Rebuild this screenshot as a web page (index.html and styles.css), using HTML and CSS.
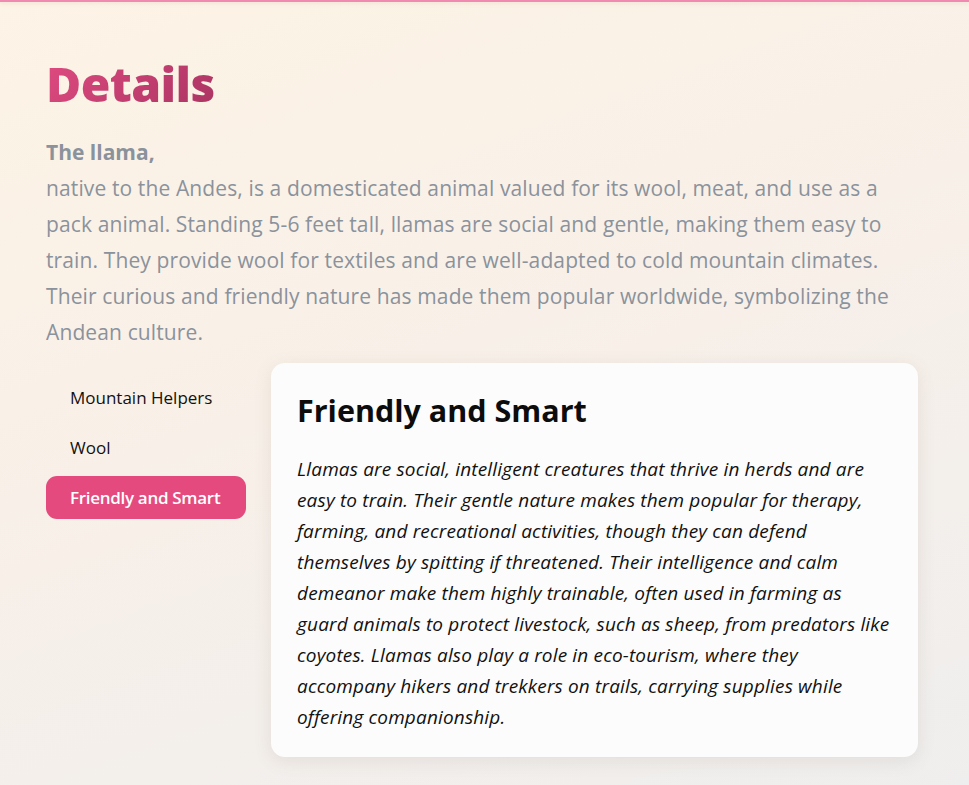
FILE: index.html
```html
<!DOCTYPE html>
<html lang="en">
<head>
<meta charset="utf-8">
<title>Details</title>
<link rel="stylesheet" href="styles.css">
</head>
<body>
<div class="topline"></div>
<main class="page">
  <h1 class="title">Details</h1>
  <p class="intro"><strong>The llama,</strong><br>native to the Andes, is a domesticated animal valued for its wool, meat, and use as a pack animal. Standing 5-6 feet tall, llamas are social and gentle, making them easy to train. They provide wool for textiles and are well-adapted to cold mountain climates. Their curious and friendly nature has made them popular worldwide, symbolizing the Andean culture.</p>
  <section class="tabs">
    <nav class="tab-list">
      <button class="tab">Mountain Helpers</button>
      <button class="tab">Wool</button>
      <button class="tab active">Friendly and Smart</button>
    </nav>
    <article class="card">
      <h2 class="card-title">Friendly and Smart</h2>
      <p class="card-text">Llamas are social, intelligent creatures that thrive in herds and are easy to train. Their gentle nature makes them popular for therapy, farming, and recreational activities, though they can defend themselves by spitting if threatened. Their intelligence and calm demeanor make them highly trainable, often used in farming as guard animals to protect livestock, such as sheep, from predators like coyotes. Llamas also play a role in eco-tourism, where they accompany hikers and trekkers on trails, carrying supplies while offering companionship.</p>
    </article>
  </section>
</main>
</body>
</html>
```

FILE: styles.css
```css
* { box-sizing: border-box; }
html, body { margin: 0; padding: 0; }
body {
  min-height: 785px;
  background: linear-gradient(160deg, #fdf3e6 0%, #f8f0e8 45%, #efeeee 100%);
  font-family: "Open Sans", "Noto Sans", sans-serif;
}
.topline {
  height: 2px;
  background: #f08ab0;
  box-shadow: 0 1px 4px rgba(200, 150, 120, 0.25);
}
.page {
  padding: 52px 51px 30px 46px;
}
.title {
  margin: 0;
  font-size: 48px;
  line-height: 60px;
  font-weight: 800;
  letter-spacing: -0.6px;
  background: linear-gradient(135deg, #e04b80, #a93462);
  -webkit-background-clip: text;
  background-clip: text;
  color: transparent;
  display: inline-block;
}
.intro {
  margin: 20px 0 0 0;
  font-size: 21px;
  line-height: 36px;
  letter-spacing: 0.12px;
  color: #8a929c;
}
.intro strong { font-weight: 700; letter-spacing: 0; }
.tabs {
  display: flex;
  gap: 25px;
  margin-top: 13px;
  align-items: flex-start;
}
.tab-list {
  width: 200px;
  flex: none;
  display: flex;
  flex-direction: column;
  gap: 7px;
  padding-top: 13px;
}
.tab {
  font-family: inherit;
  font-size: 17px;
  line-height: 23px;
  padding: 10px 24px;
  border: none;
  border-radius: 11px;
  background: transparent;
  color: #111;
  text-align: left;
  font-weight: 500;
  white-space: nowrap;
  cursor: pointer;
}
.tab.active {
  background: #e54a7e;
  color: #fff;
  font-weight: 600;
  letter-spacing: -0.3px;
}
.card {
  flex: 1;
  background: #fcfcfc;
  border-radius: 14px;
  padding: 27px 23px 24px 26px;
  box-shadow: 0 4px 18px rgba(120, 100, 80, 0.12);
}
.card-title {
  margin: 0;
  font-size: 30.5px;
  line-height: 40px;
  font-weight: 700;
  color: #0c0c0c;
}
.card-text {
  margin: 24px 0 0 0;
  font-size: 19px;
  line-height: 31px;
  letter-spacing: 0.16px;
  font-style: italic;
  color: #111;
}
```
